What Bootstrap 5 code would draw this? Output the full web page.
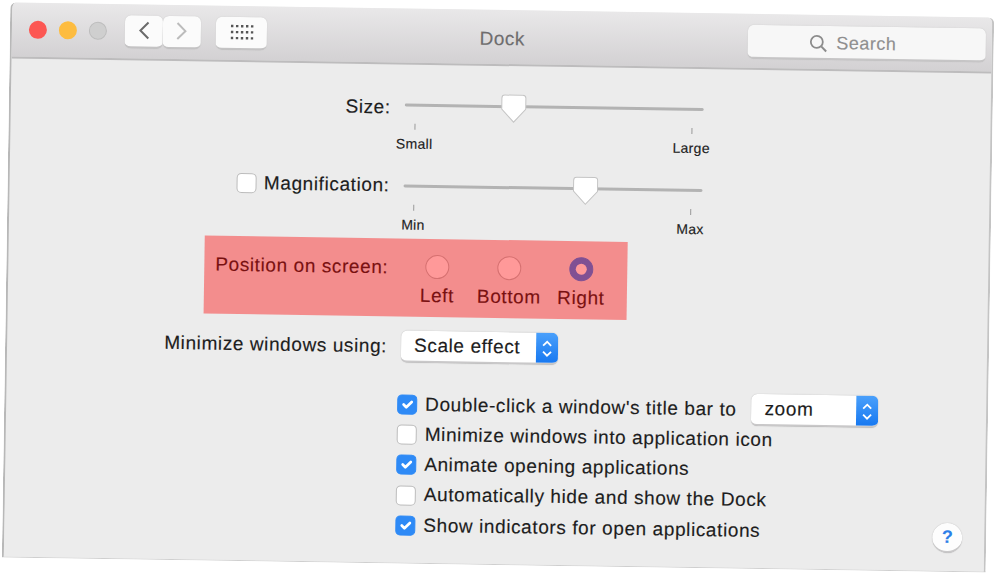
<!DOCTYPE html>
<html lang="en">
<head>
<meta charset="utf-8">
<title>Dock</title>
<link href="https://cdn.jsdelivr.net/npm/bootstrap@5.3.0/dist/css/bootstrap.min.css" rel="stylesheet">
<style>
html,body{height:100%;overflow:hidden;background:#fff}
body{font-family:"Liberation Sans",Arial,sans-serif;font-size:19px;letter-spacing:.6px;color:#1d1d1d;padding:10px 0 0 6px;-webkit-text-stroke:.15px}
.wnd{width:984px;height:555px;background:#ececec;transform:rotate(.88deg);transform-origin:494px 278px;border:solid #cfcfcf;border-width:0 2px 1px 2px;border-left-color:#b8b8b8;border-right-color:#c4c4c4;border-radius:6px 6px 0 0;overflow:hidden;display:flex;flex-direction:column}
.tbar{height:56px;flex:none;padding:0 6px 0 17px;background:linear-gradient(#e9e8e9,#d3d1d3);border-bottom:2px solid #bdbcbd}
.lamp{width:18px;height:18px;border-radius:50%;flex:none}
.lamp-r{background:#fc5753}.lamp-y{background:#fdbc40}.lamp-g{background:#cfcfcf;border:1px solid #bdbdbd}
.lamps{gap:12px;margin-right:18px}
.tbtn{height:33px;background:#fbfbfb;border:0;border-bottom:2px solid #c4c3c4;border-radius:6px;padding:0;box-shadow:0 0 1px #bbb}
.tbtn-nav{width:38px}.tbtn-grid{width:51px;margin-left:15px}
.wtitle{flex:1;text-align:center;font-size:19px;letter-spacing:.5px;color:#6e6d6e;padding:5px 10px 0 0}
.srch{width:238px;height:34px;margin-top:2px;padding:3px 28px 0 0;background:#f7f7f7;border-radius:6px;border-bottom:2px solid #c6c5c6;color:#8f8f8f;font-size:18px;letter-spacing:.5px;box-shadow:0 0 1px #bbb}
.pane{flex:1;position:relative;padding-top:24px}
.setrow{display:grid;grid-template-columns:380px 1fr;column-gap:14px;position:relative}
.lbl{text-align:right;line-height:32px;white-space:nowrap;align-self:start}
.lbl-size{padding-top:3px}
.sld{width:299px}
.trk{height:32px;position:relative;display:flex;align-items:center}
.trk::before{content:"";display:block;width:100%;height:3px;border-radius:2px;background:#b3b3b3}
.thm{position:absolute;top:4px;width:26px;height:30px;margin-left:-13px}
.ticks{padding:3px 3px 0 0;font-size:14px;letter-spacing:.3px;line-height:18px;color:#222}
.tck{width:46px;margin-left:-13px;text-align:center}
.tck:last-child{margin-right:-14px;margin-left:0}
.tck::before{content:"";display:block;width:1px;height:6px;background:#999;margin:0 auto 5px}
.mt-mag{margin-top:17px}
.mbox{width:20px;height:20px;flex:none;margin:0 7px 0 0;background-color:#fff;border:1px solid #bcbcbc;border-radius:4px}
.mt-pos{margin-top:21px}
.radc{width:72px;text-align:center;line-height:24px}
.rad{width:24px;height:24px;display:block;margin:0 auto 5px;float:none;background-color:#fff;border:1px solid #bbb}
.rad:checked{background-color:#2c86f6;border-color:#2c86f6}
.lbl-top{line-height:26px}
.redmark{position:absolute;left:196px;right:361px;top:-16px;height:78px;background:rgba(255,0,0,.4);pointer-events:none}
.radhost{margin-left:-1px}
.mt-min{margin-top:23px}
.pop{height:32px;background:#fff;border-radius:6px;border-bottom:2px solid #c9c8c9;box-shadow:0 0 1px #aaa;overflow:hidden}
.pop-a{width:157px}.pop-b{width:127px;margin-left:7px}
.poptxt{flex:1;padding-left:13px;line-height:30px;white-space:nowrap}
.popcar{width:22px;margin-bottom:-2px;background:linear-gradient(#4aa0fb,#1476f0)}
.chks{margin-top:27px;padding-left:391px;padding-right:22px}
.crow{height:30.2px;gap:8px;white-space:nowrap}
.cbx{width:20px;height:20px;margin:0;flex:none;float:none;border:1px solid #bcbcbc;border-radius:4px;background-color:#fff}
.cbx:checked{background-color:#2e8af6;border-color:#2e8af6}
.form-check-input:focus{box-shadow:none}
.helpb{width:30px;height:30px;border-radius:50%;background:#fdfdfd;border:0;border-bottom:2px solid #c9c8c9;box-shadow:0 0 1px #aaa;color:#2c7fe8;font-weight:700;font-size:18px;padding:0;line-height:26px;margin-bottom:-4px}
</style>
</head>
<body>
<div class="wnd">
  <div class="tbar d-flex align-items-center">
    <div class="lamps d-flex"><span class="lamp lamp-r"></span><span class="lamp lamp-y"></span><span class="lamp lamp-g"></span></div>
    <div class="d-flex">
      <button class="tbtn tbtn-nav d-flex align-items-center justify-content-center" aria-label="Back"><svg width="12" height="20" viewBox="0 0 12 20"><path d="M10.5 2 2.5 10l8 8" fill="none" stroke="#6a6a6a" stroke-width="2"/></svg></button>
      <button class="tbtn tbtn-nav d-flex align-items-center justify-content-center" aria-label="Forward"><svg width="12" height="20" viewBox="0 0 12 20"><path d="M1.5 2l8 8-8 8" fill="none" stroke="#bcbcbc" stroke-width="2"/></svg></button>
    </div>
    <button class="tbtn tbtn-grid d-flex align-items-center justify-content-center" aria-label="Show all"><svg width="24" height="16" viewBox="0 0 24 16" fill="#555"><rect x="1" y="1" width="2.4" height="2.4"/><rect x="6" y="1" width="2.4" height="2.4"/><rect x="11" y="1" width="2.4" height="2.4"/><rect x="16" y="1" width="2.4" height="2.4"/><rect x="21" y="1" width="2.4" height="2.4"/><rect x="1" y="7" width="2.4" height="2.4"/><rect x="6" y="7" width="2.4" height="2.4"/><rect x="11" y="7" width="2.4" height="2.4"/><rect x="16" y="7" width="2.4" height="2.4"/><rect x="21" y="7" width="2.4" height="2.4"/><rect x="1" y="13" width="2.4" height="2.4"/><rect x="6" y="13" width="2.4" height="2.4"/><rect x="11" y="13" width="2.4" height="2.4"/><rect x="16" y="13" width="2.4" height="2.4"/><rect x="21" y="13" width="2.4" height="2.4"/></svg></button>
    <div class="wtitle">Dock</div>
    <div class="srch d-flex align-items-center justify-content-center gap-2">
      <svg width="19" height="19" viewBox="0 0 19 19"><circle cx="8" cy="8" r="6" fill="none" stroke="#8c8c8c" stroke-width="1.8"/><path d="M12.5 12.5 17.5 17.5" stroke="#8c8c8c" stroke-width="2"/></svg><span>Search</span>
    </div>
  </div>
  <div class="pane">
    <div class="setrow">
      <div class="lbl lbl-size">Size:</div>
      <div class="sld">
        <div class="trk"><svg class="thm" style="left:36.5%" viewBox="0 0 26 30"><path d="M4 1h18a3 3 0 0 1 3 3v11L13 28 1 15V4a3 3 0 0 1 3-3z" fill="#fff" stroke="#c4c4c4"/></svg></div>
        <div class="ticks d-flex justify-content-between"><div class="tck">Small</div><div class="tck">Large</div></div>
      </div>
    </div>
    <div class="setrow mt-mag">
      <div class="lbl d-flex justify-content-end align-items-center"><input class="form-check-input mbox" type="checkbox" aria-label="Magnification"><span>Magnification:</span></div>
      <div class="sld">
        <div class="trk"><svg class="thm" style="left:61%" viewBox="0 0 26 30"><path d="M4 1h18a3 3 0 0 1 3 3v11L13 28 1 15V4a3 3 0 0 1 3-3z" fill="#fff" stroke="#c4c4c4"/></svg></div>
        <div class="ticks d-flex justify-content-between"><div class="tck">Min</div><div class="tck">Max</div></div>
      </div>
    </div>
    <div class="setrow mt-pos">
      <div class="lbl lbl-top">Position on screen:</div>
      <div class="radhost d-flex">
        <label class="radc"><input class="form-check-input rad" type="radio" name="pos">Left</label>
        <label class="radc"><input class="form-check-input rad" type="radio" name="pos">Bottom</label>
        <label class="radc"><input class="form-check-input rad" type="radio" name="pos" checked>Right</label>
      </div>
      <div class="redmark"></div>
    </div>
    <div class="setrow mt-min">
      <div class="lbl">Minimize windows using:</div>
      <div class="pop pop-a d-flex">
        <div class="poptxt">Scale effect</div>
        <div class="popcar d-flex align-items-center justify-content-center"><svg width="12" height="20" viewBox="0 0 12 20"><path d="M2 7l4-4 4 4M2 13l4 4 4-4" fill="none" stroke="#fff" stroke-width="1.8"/></svg></div>
      </div>
    </div>
    <div class="chks d-flex justify-content-between">
      <div>
        <div class="crow d-flex align-items-center"><input class="form-check-input cbx" type="checkbox" checked aria-label="Double-click"><span>Double-click a window's title bar to</span>
          <div class="pop pop-b d-flex"><div class="poptxt">zoom</div><div class="popcar d-flex align-items-center justify-content-center"><svg width="12" height="20" viewBox="0 0 12 20"><path d="M2 7l4-4 4 4M2 13l4 4 4-4" fill="none" stroke="#fff" stroke-width="1.8"/></svg></div></div>
        </div>
        <div class="crow d-flex align-items-center"><input class="form-check-input cbx" type="checkbox" aria-label="Minimize"><span>Minimize windows into application icon</span></div>
        <div class="crow d-flex align-items-center"><input class="form-check-input cbx" type="checkbox" checked aria-label="Animate"><span>Animate opening applications</span></div>
        <div class="crow d-flex align-items-center"><input class="form-check-input cbx" type="checkbox" aria-label="Hide"><span>Automatically hide and show the Dock</span></div>
        <div class="crow d-flex align-items-center"><input class="form-check-input cbx" type="checkbox" checked aria-label="Indicators"><span>Show indicators for open applications</span></div>
      </div>
      <button class="helpb align-self-end">?</button>
    </div>
  </div>
</div>
<script src="https://cdn.jsdelivr.net/npm/bootstrap@5.3.0/dist/js/bootstrap.bundle.min.js"></script>
</body>
</html>
